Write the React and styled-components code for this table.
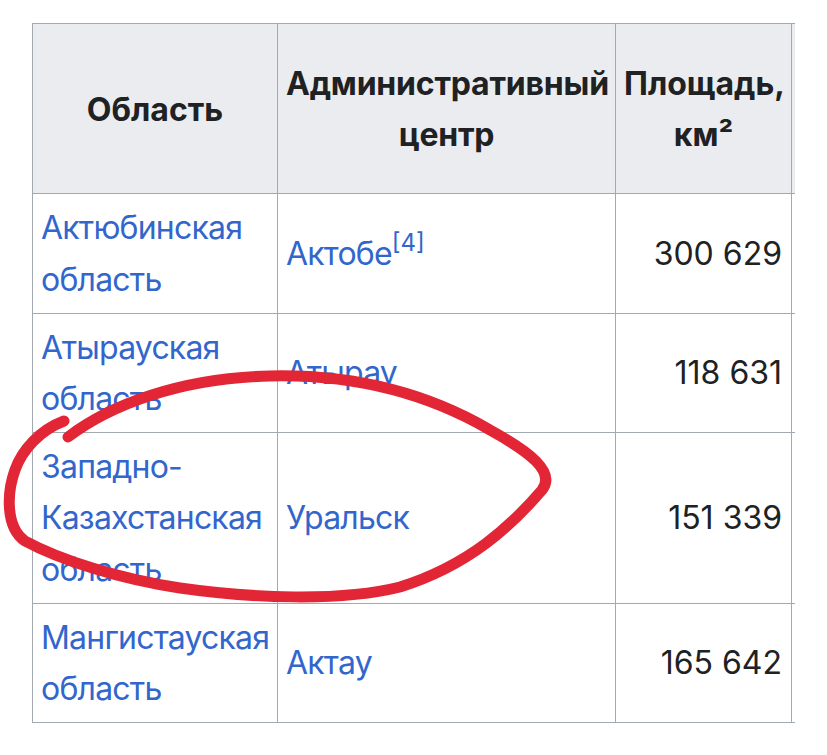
import React from 'react'
import styled, { createGlobalStyle } from 'styled-components'

const GlobalStyle = createGlobalStyle`
  html, body {
    margin: 0;
    padding: 0;
    background: #ffffff;
  }
  body {
    font-family: Inter, "Noto Sans", "Liberation Sans", sans-serif;
    color: #202122;
  }
`

const Page = styled.div`
  padding: 23px 0 0 32px;
  position: relative;
  width: 827px;
  height: 755px;
  box-sizing: border-box;
`

const Scroller = styled.div`
  width: 763px;
  overflow: hidden;
`

const Table = styled.table`
  border-collapse: collapse;
  table-layout: fixed;
  width: 766px;
  font-size: 32px;
  line-height: 51.2px;
`

const Th = styled.th`
  background: #eaecf0;
  border: 1px solid #a2a9b1;
  padding: 34px 8px 33px;
  font-weight: 700;
  text-align: center;
  vertical-align: middle;
  color: #202122;
  letter-spacing: ${p => p.$tight ? '-0.2px' : '0'};
`

const Td = styled.td`
  border: 1px solid #a2a9b1;
  padding: 8px 9px 8px 8px;
  vertical-align: middle;
  text-align: ${p => p.$num ? 'right' : 'left'};
  color: #202122;
`

const Stub = styled.td`
  border-top: 1px solid #a2a9b1;
  border-bottom: 1px solid #a2a9b1;
  padding: 0;
  background: ${p => p.$head ? '#eaecf0' : 'transparent'};
`

const Link = styled.a`
  color: #3366cc;
  text-decoration: none;
  letter-spacing: -0.8px;
`

const Ref = styled.sup`
  font-size: 24px;
  line-height: 1;
  vertical-align: 14px;
  color: #3366cc;
`

const Scribble = styled.svg`
  position: absolute;
  left: 0;
  top: 0;
  pointer-events: none;
`

const rows = [
  { region: ['Актюбинская', 'область'], center: 'Актобе', ref: '4', area: '300 629' },
  { region: ['Атырауская', 'область'], center: 'Атырау', area: '118 631' },
  { region: ['Западно-', 'Казахстанская', 'область'], center: 'Уральск', area: '151 339' },
  { region: ['Мангистауская', 'область'], center: 'Актау', area: '165 642' },
]

export default function App() {
  return (
    <Page>
      <GlobalStyle />
      <Scroller>
        <Table>
          <colgroup>
            <col style={{ width: 245 }} />
            <col style={{ width: 338 }} />
            <col style={{ width: 176 }} />
            <col style={{ width: 7 }} />
          </colgroup>
          <thead>
            <tr>
              <Th>Область</Th>
              <Th $tight>Административный центр</Th>
              <Th>Площадь, км²</Th>
              <Stub $head />
            </tr>
          </thead>
          <tbody>
            {rows.map(r => (
              <tr key={r.center}>
                <Td>
                  <Link href="#">
                    {r.region.map((w, i) => (
                      <React.Fragment key={i}>
                        {w}
                        {i < r.region.length - 1 && <br />}
                      </React.Fragment>
                    ))}
                  </Link>
                </Td>
                <Td>
                  <Link href="#">{r.center}</Link>
                  {r.ref && <Ref>[{r.ref}]</Ref>}
                </Td>
                <Td $num>{r.area}</Td>
                <Stub />
              </tr>
            ))}
          </tbody>
        </Table>
      </Scroller>
      <Scribble width="827" height="755" viewBox="0 0 827 755">
        <path
          d="M68 437 C110 405 180 378 270 376 C360 374 430 395 490 430 C530 452 556 472 542 490 C512 525 470 565 400 587 C340 602 250 598 180 588 C120 579 60 560 25 541 C5 527 7 492 15 470 C22 450 40 430 64 421"
          fill="none"
          stroke="#e32636"
          strokeWidth="11"
          strokeLinecap="round"
          strokeLinejoin="round"
        />
      </Scribble>
    </Page>
  )
}
